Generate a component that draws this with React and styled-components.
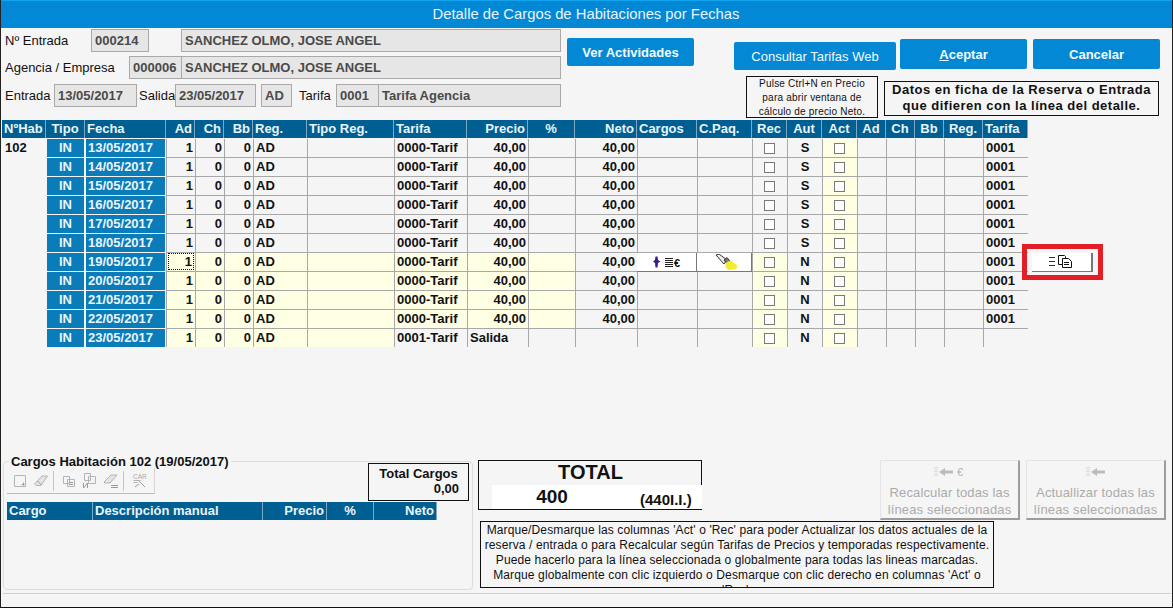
import React from 'react';
import styled, { createGlobalStyle } from 'styled-components';

const GlobalStyle = createGlobalStyle`
  html, body { margin: 0; padding: 0; background: #f5f5f5; }
  body { font-family: "Liberation Sans", Arial, sans-serif; }
`;

const BLUE = '#0288d4';
const HEAD = '#005f92';
const CELL_BLUE = '#0a7cba';
const YELLOW = '#ffffe4';
const GRID = '#a8a8a8';

const columns = [44, 39, 81, 29, 29, 29, 54, 87, 73, 61, 47, 62, 60, 55, 35, 35, 35, 29, 29, 29, 39, 45];
const gridTemplate = columns.map(c => `${c}px`).join(' ');

const headers = [
  ['NºHab', 'left'], ['Tipo', 'center'], ['Fecha', 'left'], ['Ad', 'right'], ['Ch', 'right'], ['Bb', 'right'],
  ['Reg.', 'left'], ['Tipo Reg.', 'left'], ['Tarifa', 'left'], ['Precio', 'right'], ['%', 'center'], ['Neto', 'right'],
  ['Cargos', 'left'], ['C.Paq.', 'left'], ['Rec', 'center'], ['Aut', 'center'], ['Act', 'center'],
  ['Ad', 'center'], ['Ch', 'center'], ['Bb', 'center'], ['Reg.', 'center'], ['Tarifa', 'left'],
];

const rows = [
  { fecha: '13/05/2017', aut: 'S' },
  { fecha: '14/05/2017', aut: 'S' },
  { fecha: '15/05/2017', aut: 'S' },
  { fecha: '16/05/2017', aut: 'S' },
  { fecha: '17/05/2017', aut: 'S' },
  { fecha: '18/05/2017', aut: 'S' },
  { fecha: '19/05/2017', aut: 'N', selected: true },
  { fecha: '20/05/2017', aut: 'N' },
  { fecha: '21/05/2017', aut: 'N' },
  { fecha: '22/05/2017', aut: 'N' },
  { fecha: '23/05/2017', aut: 'N', last: true },
];

const Window = styled.div`
  width: 1173px;
  height: 608px;
  box-sizing: border-box;
  overflow: hidden;
  background: #f5f5f5;
  border-left: 1px solid #222;
  border-bottom: 1px solid #111;
  border-right: 1px solid #222;
  display: flex;
  flex-direction: column;
  color: #111;
`;

const TitleBar = styled.div`
  height: 28px;
  flex: none;
  margin: 0 -1px;
  box-sizing: border-box;
  border-top: 1px solid #12a4ee;
  background: ${BLUE};
  color: #e8f5fc;
  font-size: 14.8px;
  line-height: 27px;
  text-align: center;
  padding-right: 1px;
`;

const Top = styled.div`
  height: 92px;
  flex: none;
  display: flex;
`;

const Form = styled.div`
  width: 560px;
  flex: none;
  display: flex;
  flex-direction: column;
  padding-top: 1px;
`;

const FormRow = styled.div`
  display: flex;
  align-items: center;
  height: ${p => p.$h || 23}px;
  margin-bottom: ${p => p.$gap || 4}px;
  font-size: 13px;
`;

const Label = styled.span`
  width: ${p => p.$w}px;
  flex: none;
  padding-left: ${p => p.$pad || 0}px;
  box-sizing: border-box;
  white-space: nowrap;
`;

const ReadOnly = styled.div`
  width: ${p => p.$w}px;
  height: 23px;
  flex: none;
  box-sizing: border-box;
  margin-left: ${p => p.$left || 0}px;
  border: 1px solid #a9a9a9;
  border-left-width: ${p => (p.$joined ? 0 : 1)}px;
  background: #e6e6e6;
  color: #4a4a4a;
  font-weight: bold;
  font-size: 13px;
  line-height: 21px;
  padding-left: 3px;
  white-space: nowrap;
  overflow: hidden;
`;

const BlueButton = styled.div`
  background: ${BLUE};
  color: #f4fbff;
  border-radius: 2px;
  height: ${p => p.$h || 30}px;
  width: ${p => p.$w}px;
  flex: none;
  box-sizing: border-box;
  margin-left: ${p => p.$left || 0}px;
  margin-top: ${p => p.$top || 0}px;
  font-size: 13px;
  font-weight: ${p => (p.$light ? 'normal' : 'bold')};
  display: flex;
  align-items: center;
  justify-content: center;
  u { text-decoration: underline; }
`;

const RightTop = styled.div`
  display: flex;
  flex-direction: column;
  margin-left: 40px;
`;

const ButtonRow = styled.div`
  display: flex;
  align-items: flex-start;
  height: 48px;
`;

const NoteRow = styled.div`
  display: flex;
  margin-left: 12px;
  align-items: flex-start;
`;

const SmallNote = styled.div`
  width: 132px;
  height: 42px;
  box-sizing: border-box;
  border: 1px solid #111;
  font-size: 10px;
  letter-spacing: 0.2px;
  line-height: 14px;
  text-align: center;
  white-space: nowrap;
  background: #f5f5f5;
`;

const BigNote = styled.div`
  width: 275px;
  height: 35px;
  margin: 5px 0 0 6px;
  box-sizing: border-box;
  border: 1px solid #111;
  font-size: 13px;
  font-weight: bold;
  line-height: 16px;
  letter-spacing: 0.5px;
  text-align: center;
  white-space: nowrap;
`;

const TableArea = styled.div`
  flex: none;
  height: 227px;
  margin-left: 1px;
  position: relative;
`;

const Grid = styled.div`
  display: grid;
  grid-template-columns: ${gridTemplate};
  grid-auto-rows: 18px;
  row-gap: 1px;
  width: 1026px;
`;

const HeadCell = styled.div`
  background: ${HEAD};
  color: #eaf4fa;
  font-size: 13px;
  font-weight: bold;
  line-height: 18px;
  height: 18px;
  text-align: ${p => p.$align};
  padding: 0 2px;
  box-sizing: border-box;
  border-right: 1px solid #7fa9c2;
  white-space: nowrap;
  overflow: hidden;
`;

const Cell = styled.div`
  background: ${p => (p.$yellow ? YELLOW : '#f5f5f5')};
  height: 18px;
  border-left: 1px solid ${p => (p.$plain ? 'transparent' : GRID)};
  box-shadow: 0 1px 0 ${p => (p.$plain || p.$end ? 'transparent' : GRID)};
  box-sizing: border-box;
  font-size: 13px;
  font-weight: bold;
  line-height: 18px;
  padding: 0 2px;
  text-align: ${p => p.$align || 'left'};
  white-space: nowrap;
  overflow: hidden;
  display: ${p => (p.$center ? 'flex' : 'block')};
  align-items: center;
  justify-content: center;
`;

const BlueCell = styled.div`
  background: ${CELL_BLUE};
  color: #eaf5fb;
  height: 18px;
  margin: 0 1px;
  font-size: 13px;
  font-weight: bold;
  line-height: 18px;
  padding: 0 ${p => (p.$center ? 0 : 2)}px;
  text-align: ${p => (p.$center ? 'center' : 'left')};
`;

const FocusMark = styled.span`
  display: block;
  height: 17px;
  margin: 0 -1px 0 -1px;
  padding-right: 2px;
  outline: 1px dotted #111;
  outline-offset: -1px;
  line-height: 18px;
`;

const Check = styled.span`
  width: 11px;
  height: 11px;
  margin-left: -2px;
  box-sizing: border-box;
  border: 1px solid #7a7a7a;
  background: #fdfdfd;
`;

const GridButton = styled.div`
  height: 19px;
  background: #fff;
  border-right: 1px solid #777;
  border-bottom: 1px solid #777;
  box-sizing: border-box;
  display: flex;
  align-items: center;
  justify-content: center;
`;

const RedFrame = styled.div`
  position: absolute;
  left: 1020px;
  top: 124px;
  width: 81px;
  height: 36px;
  box-sizing: border-box;
  border: 5px solid #e21f26;
  display: flex;
  align-items: center;
  justify-content: center;
`;

const FrameButton = styled(GridButton)`
  width: 61px;
  height: 19px;
  border-right: 2px solid #777;
`;

const Bottom = styled.div`
  flex: 1;
  display: flex;
  flex-direction: column;
  padding-top: 113px;
`;

const BottomRow = styled.div`
  height: 133px;
  flex: none;
  display: flex;
  align-items: flex-start;
  padding-left: 2px;
`;

const Divider = styled.div`
  height: 1px;
  margin: 0 1px 0 2px;
  background: #cfcfcf;
`;

const Charges = styled.fieldset`
  width: 470px;
  height: 135px;
  flex: none;
  box-sizing: border-box;
  margin: -5px 0 0;
  padding: 0 3px;
  border: 1px solid #dcdcdc;
  border-radius: 4px;
  min-width: 0;
  legend {
    font-size: 13px;
    font-weight: bold;
    padding: 0 2px;
    margin-left: 2px;
    line-height: 13px;
    white-space: nowrap;
  }
`;

const ChargesTop = styled.div`
  display: flex;
  align-items: flex-start;
  height: 39px;
  margin-top: -5px;
`;

const Toolbar = styled.div`
  width: 148px;
  height: 26px;
  margin-top: 5px;
  box-sizing: border-box;
  border-right: 1px solid #d5d5d5;
  border-bottom: 1px solid #bbb;
  display: flex;
  align-items: center;
  padding-left: 4px;
  gap: 3px;
`;

const ToolSep = styled.span`
  width: 1px;
  height: 20px;
  background: #c4c4c4;
  margin: 0 3px 0 0;
`;

const TotalBox = styled.div`
  width: 101px;
  height: 38px;
  margin-left: 213px;
  box-sizing: border-box;
  border: 1px solid #111;
  font-size: 13px;
  font-weight: bold;
  line-height: 15px;
  padding: 2px 9px 0 9px;
  text-align: center;
  white-space: nowrap;
  div { text-align: right; }
`;

const ChargeHead = styled.div`
  display: grid;
  grid-template-columns: 86px 170px 64px 47px 63px;
  width: 430px;
`;

const Middle = styled.div`
  margin-left: 5px;
  flex: none;
  display: flex;
  flex-direction: column;
`;

const MiddleTop = styled.div`
  display: flex;
  align-items: flex-start;
  height: 50px;
`;

const TotalPanel = styled.div`
  width: 224px;
  height: 50px;
  box-sizing: border-box;
  border: 1px solid #111;
  display: flex;
  flex-direction: column;
  font-weight: bold;
`;

const TotalTitle = styled.div`
  height: 24px;
  font-size: 20px;
  line-height: 23px;
  padding-left: 1px;
  text-align: center;
`;

const TotalValue = styled.div`
  flex: 1;
  margin: 0 -1px 0 13px;
  background: #fff;
  display: flex;
  align-items: flex-end;
`;

const TotalNumber = styled.span`
  width: 120px;
  text-align: center;
  font-size: 19px;
  line-height: 24px;
`;

const TotalExtra = styled.span`
  margin-left: 28px;
  font-size: 15px;
  line-height: 19px;
  white-space: nowrap;
`;

const HelpBox = styled.div`
  width: 514px;
  height: 67px;
  margin: 11px 0 0 2px;
  box-sizing: border-box;
  border: 1px solid #111;
  font-size: 12px;
  letter-spacing: 0.125px;
  line-height: 15px;
  padding-top: 1px;
  text-align: center;
  overflow: hidden;
  color: #111;
`;

const ActionGroup = styled.div`
  display: flex;
  gap: 6px;
  margin-left: 178px;
`;

const FlatButton = styled.div`
  width: 140px;
  height: 60px;
  flex: none;
  box-sizing: border-box;
  border: 1px solid #e4e4e4;
  border-right: 2px solid #9c9c9c;
  border-bottom: 2px solid #9c9c9c;
  color: #ababab;
  font-size: 13px;
  letter-spacing: 0.15px;
  line-height: 17px;
  text-align: center;
  padding-top: 5px;
  white-space: nowrap;
  svg { display: block; margin: 0 auto 6px; }
`;

const PersonEuroIcon = () => (
  <svg width="28" height="12" viewBox="0 0 28 12">
    <path d="M2.500 0.500 L4.500 0.500 L5 4 L7.500 5.500 L5 7 L4.500 11.500 L2.500 11.500 L2 7 L0 5.500 L2 4 Z" fill="#3a1a90" />
    <path d="M12 2.500h8M12 4.500h8M12 6.500h8M12 8.500h8M12 10.500h8" stroke="#222" strokeWidth="1" />
    <text x="21" y="10.500" fontSize="11" fontWeight="bold" fontFamily="Liberation Sans" fill="#111">€</text>
  </svg>
);

const FlashlightIcon = () => (
  <svg width="24" height="17" viewBox="0 0 24 17" style={{ marginLeft: 6 }}>
    <path d="M1 1 L4 0 L12 6 L9 10 Z" fill="#f0f0f0" stroke="#333" strokeWidth="1" />
    <path d="M9 6 L12 3.500 L15 7 L12 10 Z" fill="#777" stroke="#222" strokeWidth="0.800" />
    <circle cx="15" cy="11.500" r="4.500" fill="#f4ec30" />
    <circle cx="19" cy="12.500" r="3" fill="#f4ec30" />
  </svg>
);

const CopyListIcon = () => (
  <svg width="25" height="13" viewBox="0 0 25 13">
    <path d="M0 2.500h6M0 6.500h6M0 10.500h6" stroke="#23238e" strokeWidth="1" />
    <path d="M9.500 0.500h6l1 1v8h-7z" fill="#fff" stroke="#111" />
    <path d="M13.500 3.500h6l3 3v6h-9z" fill="#fff" stroke="#111" />
    <path d="M15 7.500h5M15 9.500h5" stroke="#111" />
  </svg>
);

const ArrowIcon = ({ euro }) => (
  <svg width={euro ? 32 : 20} height="12" viewBox={euro ? '0 0 32 12' : '0 0 20 12'}>
    <path d="M1 1v10M3 1v10" stroke="#c4c4c4" strokeDasharray="1 1" />
    <path d="M5 6 L11 2 V4.500 H19 V7.500 H11 V10 Z" fill="#bcbcbc" />
    {euro && <text x="23" y="10" fontSize="11" fontFamily="Liberation Sans" fill="#b0b0b0">€</text>}
  </svg>
);

const ToolIcon = ({ d, fill, accent, label }) => (
  <svg width="18" height="18" viewBox="0 0 18 18" fill={fill || 'none'} stroke="#b4b4b4">
    <path d={d} />
    {accent && <path d={accent} stroke="#9a9a9a" fill="none" />}
    {label && <text x="3" y="6.500" fontSize="6.500" fontFamily="Liberation Sans" stroke="none" fill="#a8a8a8">{label}</text>}
  </svg>
);

const App = () => (
  <>
    <GlobalStyle />
    <Window>
      <TitleBar>Detalle de Cargos de Habitaciones por Fechas</TitleBar>

      <Top>
        <Form>
          <FormRow>
            <Label $w={90} $pad={4}>Nº Entrada</Label>
            <ReadOnly $w={58}>000214</ReadOnly>
            <ReadOnly $w={380} $left={32}>SANCHEZ OLMO, JOSE ANGEL</ReadOnly>
          </FormRow>
          <FormRow $gap={5}>
            <Label $w={128} $pad={4}>Agencia / Empresa</Label>
            <ReadOnly $w={53}>000006</ReadOnly>
            <ReadOnly $w={379} $joined>SANCHEZ OLMO, JOSE ANGEL</ReadOnly>
          </FormRow>
          <FormRow>
            <Label $w={53} $pad={4}>Entrada</Label>
            <ReadOnly $w={83}>13/05/2017</ReadOnly>
            <Label $w={38} $pad={2}>Salida</Label>
            <ReadOnly $w={81}>23/05/2017</ReadOnly>
            <ReadOnly $w={31} $left={5}>AD</ReadOnly>
            <Label $w={44} $pad={7}>Tarifa</Label>
            <ReadOnly $w={43}>0001</ReadOnly>
            <ReadOnly $w={182} $joined>Tarifa Agencia</ReadOnly>
          </FormRow>
        </Form>
        <BlueButton $w={127} $h={28} $left={6} $top={10}>Ver Actividades</BlueButton>
        <RightTop>
          <ButtonRow>
            <BlueButton $w={162} $h={28} $top={14} $light>Consultar Tarifas Web</BlueButton>
            <BlueButton $w={127} $left={4} $top={11}><span><u>A</u>ceptar</span></BlueButton>
            <BlueButton $w={127} $left={6} $top={11}>Cancelar</BlueButton>
          </ButtonRow>
          <NoteRow>
            <SmallNote>
              Pulse Ctrl+N en Precio<br />para abrir ventana de<br />cálculo de precio Neto.
            </SmallNote>
            <BigNote>
              Datos en ficha de la Reserva o Entrada<br />que difieren con la línea del detalle.
            </BigNote>
          </NoteRow>
        </RightTop>
      </Top>

      <TableArea>
        <Grid>
          {headers.map(([label, align], i) => (
            <HeadCell key={i} $align={align}>{label}</HeadCell>
          ))}
          {rows.map((row, i) => {
            const warm = i >= 6;
            const priced = warm && !row.last;
            const N = row.aut === 'N';
            const end = row.last;
            return (
              <React.Fragment key={row.fecha}>
                <Cell $plain>{i === 0 ? '102' : ''}</Cell>
                <BlueCell $center>IN</BlueCell>
                <BlueCell>{row.fecha}</BlueCell>
                <Cell $end={end} $yellow={warm} $align="right">
                  {row.selected ? <FocusMark>1</FocusMark> : '1'}
                </Cell>
                <Cell $end={end} $yellow={warm} $align="right">0</Cell>
                <Cell $end={end} $yellow={warm} $align="right">0</Cell>
                <Cell $end={end} $yellow={warm}>AD</Cell>
                <Cell $end={end} $yellow={warm} />
                <Cell $end={end} $yellow={priced}>{row.last ? '0001-Tarif' : '0000-Tarif'}</Cell>
                <Cell $end={end} $yellow={priced} $align={row.last ? 'left' : 'right'}>{row.last ? 'Salida' : '40,00'}</Cell>
                <Cell $end={end} $yellow={priced} />
                <Cell $end={end} $align="right">{row.last ? '' : '40,00'}</Cell>
                {row.selected ? <GridButton><PersonEuroIcon /></GridButton> : <Cell $end={end} />}
                {row.selected ? <GridButton><FlashlightIcon /></GridButton> : <Cell $end={end} />}
                <Cell $end={end} $yellow={N} $center><Check /></Cell>
                <Cell $end={end} $center>{row.aut}</Cell>
                <Cell $end={end} $yellow $center><Check /></Cell>
                <Cell $end={end} />
                <Cell $end={end} />
                <Cell $end={end} />
                <Cell $end={end} />
                <Cell $end={end}>{row.last ? '' : '0001'}</Cell>
              </React.Fragment>
            );
          })}
        </Grid>
        <RedFrame>
          <FrameButton><CopyListIcon /></FrameButton>
        </RedFrame>
      </TableArea>

      <Bottom>
        <BottomRow>
          <Charges>
            <legend>Cargos Habitación 102 (19/05/2017)</legend>
            <ChargesTop>
              <Toolbar>
                <ToolIcon d="M3.500 3.500h11v11h-11z" accent="M10.500 12.500h3M12.500 10.500v3" />
                <ToolIcon d="M2.500 12 L10 4 h5.500 L9 13.500 H4 Z" fill="#e4e4e4" accent="M5.500 9 l4 4" />
                <ToolSep />
                <ToolIcon d="M3.500 4.500h6v7h-6zM7.500 7.500h7v7h-7z" accent="M9 10.500h4M9 12.500h4" />
                <ToolIcon d="M3.500 1.500h6v7h-6zM7.500 4.500h7v7h-7z" accent="M2.500 11v5l4-5v5" />
                <ToolIcon d="M2 10 L9 3 h6 L8 11 H3 Z" fill="#e4e4e4" accent="M9 13.500h7M9 15.500h7" />
                <ToolSep />
                <ToolIcon d="M3.500 8.500h7M3.500 10.500h4" label="CAR" accent="M9 9 l6 6M5 15 l4-3" />
              </Toolbar>
              <TotalBox>
                Total Cargos
                <div>0,00</div>
              </TotalBox>
            </ChargesTop>
            <ChargeHead>
              <HeadCell $align="left">Cargo</HeadCell>
              <HeadCell $align="left">Descripción manual</HeadCell>
              <HeadCell $align="right">Precio</HeadCell>
              <HeadCell $align="center">%</HeadCell>
              <HeadCell $align="right">Neto</HeadCell>
            </ChargeHead>
          </Charges>
          <Middle>
            <MiddleTop>
              <TotalPanel>
                <TotalTitle>TOTAL</TotalTitle>
                <TotalValue>
                  <TotalNumber>400</TotalNumber>
                  <TotalExtra>(440I.I.)</TotalExtra>
                </TotalValue>
              </TotalPanel>
              <ActionGroup>
                <FlatButton>
                  <ArrowIcon euro />
                  Recalcular todas las<br />líneas seleccionadas
                </FlatButton>
                <FlatButton>
                  <ArrowIcon />
                  Actuallizar todas las<br />líneas seleccionadas
                </FlatButton>
              </ActionGroup>
            </MiddleTop>
            <HelpBox>
              Marque/Desmarque las columnas 'Act' o 'Rec' para poder Actualizar los datos actuales de la reserva / entrada o para Recalcular según Tarifas de Precios y temporadas respectivamente. Puede hacerlo para la línea seleccionada o globalmente para todas las lineas marcadas. Marque globalmente con clic izquierdo o Desmarque con clic derecho en columnas 'Act' o 'Rec'.
            </HelpBox>
          </Middle>
        </BottomRow>
        <Divider />
      </Bottom>
    </Window>
  </>
);

export default App;
